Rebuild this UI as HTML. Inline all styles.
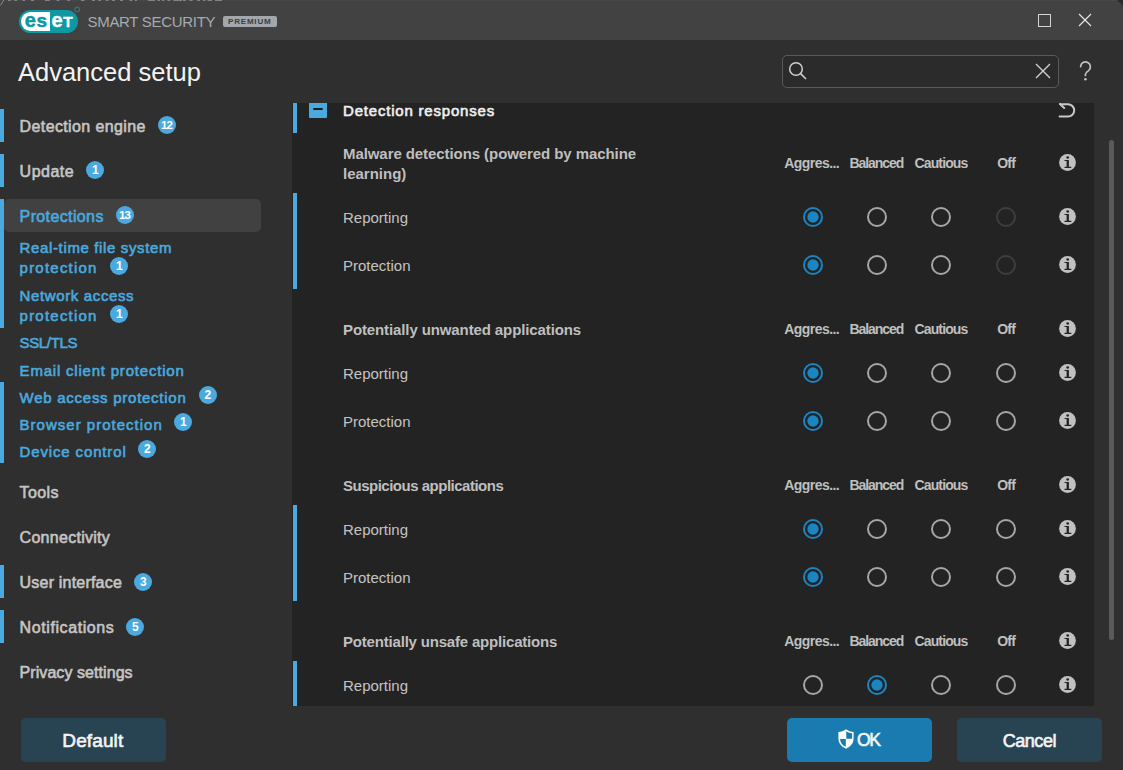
<!DOCTYPE html>
<html><head><meta charset="utf-8"><style>
html,body{margin:0;padding:0;width:1123px;height:770px;overflow:hidden;background:#2a2a2a;}
body{position:relative;font-family:"Liberation Sans", sans-serif;}
.t{position:absolute;white-space:nowrap;line-height:1;}
.r{position:absolute;box-sizing:border-box;}
div.r{box-sizing:content-box;}
.badge{position:absolute;width:18px;height:18px;border-radius:50%;background:#4aaadf;color:#fff;font-size:11px;font-weight:700;text-align:center;line-height:19.5px;letter-spacing:-0.5px;}
.btn{position:absolute;height:44px;border-radius:5px;color:#f4f4f4;font-size:19px;text-align:center;line-height:46px;}
</style></head><body>
<div class="r" style="left:0px;top:1px;width:1123px;height:769px;background:#2f2f2f;border-radius:0 8px 0 0;"></div><div class="r" style="left:0px;top:0px;width:1118px;height:1px;background:#474747;"></div><div class="r" style="left:0px;top:1px;width:1123px;height:39px;background:#424242;border-radius:0 8px 0 0;"></div><svg class="r" style="left:0;top:0" width="230" height="8" viewBox="0 0 230 8"><rect x="8" y="0" width="2.7" height="1" fill="#80858a"/><rect x="14.4" y="0" width="2.6" height="1" fill="#80858a"/><rect x="22.4" y="0" width="2.6" height="1" fill="#80858a"/><rect x="31" y="0" width="3.0" height="1" fill="#80858a"/><rect x="45" y="0" width="4.7" height="1" fill="#80858a"/><rect x="56.6" y="0" width="2.7" height="1" fill="#80858a"/><rect x="67.3" y="0" width="2.7" height="1" fill="#80858a"/><rect x="81" y="0" width="3.4" height="1" fill="#80858a"/><rect x="92" y="0" width="3.0" height="1" fill="#80858a"/><rect x="98.3" y="0" width="2.7" height="1" fill="#80858a"/><rect x="105.8" y="0" width="2.6" height="1" fill="#80858a"/><rect x="112" y="0" width="3.0" height="1" fill="#80858a"/><rect x="120" y="0" width="3.0" height="1" fill="#80858a"/><rect x="129.6" y="0" width="2.7" height="1" fill="#80858a"/><rect x="135" y="0" width="2.0" height="1" fill="#80858a"/><rect x="148" y="0" width="7.0" height="1" fill="#80858a"/><rect x="157.4" y="0" width="2.6" height="1" fill="#80858a"/><rect x="162" y="0" width="2.3" height="1" fill="#80858a"/><rect x="167.5" y="0" width="2.7" height="1" fill="#80858a"/><rect x="173.4" y="0" width="8.6" height="1" fill="#80858a"/><rect x="183" y="0" width="2.7" height="1" fill="#80858a"/><rect x="189.4" y="0" width="3.2" height="1" fill="#80858a"/><rect x="197" y="0" width="3.0" height="1" fill="#80858a"/><rect x="203" y="0" width="2.5" height="1" fill="#80858a"/><rect x="207.6" y="0" width="4.4" height="1" fill="#80858a"/><rect x="215" y="0" width="7.0" height="1" fill="#80858a"/><path d="M0.3 5.5 L3.8 0" stroke="#8a8f94" stroke-width="1"/></svg><svg class="r" style="left:19px;top:6px" width="62" height="28" viewBox="0 0 62 28">
<rect x="0" y="4" width="59" height="23" rx="11.5" fill="#0e98a2"/>
<path d="M11.5 6 H31 V25 H11.5 A9.5 9.5 0 0 1 11.5 6 Z" fill="#ffffff"/>
<text x="5.8" y="21" font-family="Liberation Sans" font-weight="700" font-size="20" fill="#0e98a2" stroke="#0e98a2" stroke-width="0.5">e</text>
<text x="17.6" y="21" font-family="Liberation Sans" font-weight="700" font-size="19" fill="#0e98a2" stroke="#0e98a2" stroke-width="0.5">s</text>
<text x="32.4" y="21" font-family="Liberation Sans" font-weight="700" font-size="20" fill="#ffffff" stroke="#ffffff" stroke-width="0.4">e</text>
<text x="44.3" y="21" font-family="Liberation Sans" font-weight="700" font-size="15.4" fill="#ffffff" stroke="#ffffff" stroke-width="0.4">T</text>
<circle cx="58.2" cy="3.5" r="2.4" fill="none" stroke="#0e98a2" stroke-width="0.9"/>
</svg><div class="t" style="left:87.5px;top:14.30px;font-size:15px;color:#a7abaf;font-weight:400;letter-spacing:-0.3px;">SMART SECURITY</div><div class="r" style="left:222.5px;top:16px;width:54.5px;height:11px;background:#a3a7ab;border-radius:2px;"></div><div class="t" style="left:149.75px;width:200px;text-align:center;top:18.23px;font-size:8px;color:#3b3d40;font-weight:700;letter-spacing:0.8px;">PREMIUM</div><div class="r" style="left:1037.5px;top:13.8px;width:11.2px;height:11.2px;border:1.2px solid #d6d6d6;border-radius:0.5px"></div><svg class="r" style="left:1078px;top:13px" width="14" height="14" viewBox="0 0 14 14"><path d="M1 1 L13 13 M13 1 L1 13" stroke="#e6e6e6" stroke-width="1.2"/></svg><div class="t" style="left:18px;top:60.41px;font-size:25.5px;color:#f3f3f3;font-weight:400;">Advanced setup</div><div class="r" style="left:782px;top:55px;width:275px;height:31px;border:1px solid #5a5a5a;border-radius:5px;background:#2b2b2b"></div><svg class="r" style="left:787px;top:61px" width="22" height="20" viewBox="0 0 22 20"><circle cx="9" cy="8" r="6.3" fill="none" stroke="#cfcfcf" stroke-width="1.5"/><path d="M13.6 12.6 L19 18" stroke="#cfcfcf" stroke-width="1.6"/></svg><svg class="r" style="left:1035px;top:63px" width="16" height="16" viewBox="0 0 16 16"><path d="M1 1 L15 15 M15 1 L1 15" stroke="#d0d0d0" stroke-width="1.4"/></svg><svg class="r" style="left:1070px;top:55px" width="30" height="30" viewBox="0 0 30 30"><path d="M10.6 11.6 A4.9 4.9 0 1 1 18.6 15.6 Q15.4 17.6 15.4 19.6 V20.4" fill="none" stroke="#c2c2c2" stroke-width="1.7" stroke-linecap="round"/><circle cx="15.4" cy="24.2" r="1.3" fill="#c2c2c2"/></svg><div class="r" style="left:4px;top:199px;width:257px;height:33px;background:#414141;border-radius:5px;"></div><div class="r" style="left:0px;top:109px;width:4px;height:33px;background:#4aa9de;"></div><div class="r" style="left:0px;top:154px;width:4px;height:33px;background:#4aa9de;"></div><div class="r" style="left:0px;top:199px;width:4px;height:129px;background:#4aa9de;"></div><div class="r" style="left:0px;top:382px;width:4px;height:81px;background:#4aa9de;"></div><div class="r" style="left:0px;top:565px;width:4px;height:33px;background:#4aa9de;"></div><div class="r" style="left:0px;top:610px;width:4px;height:33px;background:#4aa9de;"></div><div class="t" style="left:19.6px;top:118.96px;font-size:16px;color:#c5c5c5;font-weight:400;-webkit-text-stroke:0.6px #c5c5c5;letter-spacing:0.381px;">Detection engine</div><div class="t" style="left:19.6px;top:163.96px;font-size:16px;color:#c5c5c5;font-weight:400;-webkit-text-stroke:0.6px #c5c5c5;letter-spacing:0.481px;">Update</div><div class="t" style="left:19.6px;top:208.96px;font-size:16px;color:#4aa9de;font-weight:400;-webkit-text-stroke:0.6px #4aa9de;letter-spacing:0.376px;">Protections</div><div class="t" style="left:19.6px;top:484.96px;font-size:16px;color:#c5c5c5;font-weight:400;-webkit-text-stroke:0.6px #c5c5c5;letter-spacing:0.387px;">Tools</div><div class="t" style="left:19.6px;top:529.96px;font-size:16px;color:#c5c5c5;font-weight:400;-webkit-text-stroke:0.6px #c5c5c5;letter-spacing:0.277px;">Connectivity</div><div class="t" style="left:19.6px;top:574.96px;font-size:16px;color:#c5c5c5;font-weight:400;-webkit-text-stroke:0.6px #c5c5c5;letter-spacing:0.200px;">User interface</div><div class="t" style="left:19.6px;top:619.96px;font-size:16px;color:#c5c5c5;font-weight:400;-webkit-text-stroke:0.6px #c5c5c5;letter-spacing:0.588px;">Notifications</div><div class="t" style="left:19.6px;top:664.96px;font-size:16px;color:#c5c5c5;font-weight:400;-webkit-text-stroke:0.6px #c5c5c5;letter-spacing:0.064px;">Privacy settings</div><div class="t" style="left:19.6px;top:239.50px;font-size:15px;color:#4aa9de;font-weight:400;-webkit-text-stroke:0.6px #4aa9de;letter-spacing:0.635px;">Real-time file system</div><div class="t" style="left:19.6px;top:260.30px;font-size:15px;color:#4aa9de;font-weight:400;-webkit-text-stroke:0.6px #4aa9de;letter-spacing:1.219px;">protection</div><div class="t" style="left:19.6px;top:287.50px;font-size:15px;color:#4aa9de;font-weight:400;-webkit-text-stroke:0.6px #4aa9de;letter-spacing:0.626px;">Network access</div><div class="t" style="left:19.6px;top:308.30px;font-size:15px;color:#4aa9de;font-weight:400;-webkit-text-stroke:0.6px #4aa9de;letter-spacing:1.219px;">protection</div><div class="t" style="left:19.6px;top:335.30px;font-size:15px;color:#4aa9de;font-weight:400;-webkit-text-stroke:0.6px #4aa9de;letter-spacing:-0.371px;">SSL/TLS</div><div class="t" style="left:19.6px;top:362.60px;font-size:15px;color:#4aa9de;font-weight:400;-webkit-text-stroke:0.6px #4aa9de;letter-spacing:0.791px;">Email client protection</div><div class="t" style="left:19.6px;top:389.60px;font-size:15px;color:#4aa9de;font-weight:400;-webkit-text-stroke:0.6px #4aa9de;letter-spacing:0.734px;">Web access protection</div><div class="t" style="left:19.6px;top:416.60px;font-size:15px;color:#4aa9de;font-weight:400;-webkit-text-stroke:0.6px #4aa9de;letter-spacing:1.005px;">Browser protection</div><div class="t" style="left:19.6px;top:443.50px;font-size:15px;color:#4aa9de;font-weight:400;-webkit-text-stroke:0.6px #4aa9de;letter-spacing:0.853px;">Device control</div><div class="badge" style="left:158px;top:116px;font-size:11.5px;letter-spacing:-0.9px;text-indent:-0.9px">12</div><div class="badge" style="left:86px;top:161px;font-size:12px">1</div><div class="badge" style="left:116px;top:206px;font-size:11.5px;letter-spacing:-0.9px;text-indent:-0.9px">13</div><div class="badge" style="left:110px;top:257px;font-size:12px">1</div><div class="badge" style="left:110px;top:305px;font-size:12px">1</div><div class="badge" style="left:198.5px;top:386px;font-size:12px">2</div><div class="badge" style="left:174px;top:413px;font-size:12px">1</div><div class="badge" style="left:138px;top:440px;font-size:12px">2</div><div class="badge" style="left:134px;top:572.5px;font-size:12px">3</div><div class="badge" style="left:126px;top:618px;font-size:12px">5</div><div class="r" style="left:292px;top:103px;width:802px;height:603px;background:#232323;"></div><div class="r" style="left:293px;top:103px;width:4px;height:30px;background:#4aa9de;"></div><div class="r" style="left:293px;top:193px;width:4px;height:96px;background:#4aa9de;"></div><div class="r" style="left:293px;top:505px;width:4px;height:96px;background:#4aa9de;"></div><div class="r" style="left:293px;top:661px;width:4px;height:45px;background:#4aa9de;"></div><div class="r" style="left:1109px;top:140px;width:5px;height:500px;background:#5a5a5a;border-radius:3px;"></div><div class="r" style="left:309px;top:103px;width:18px;height:15px;background:#4aa9de;border-radius:0 0 1px 1px;"></div><div class="r" style="left:312.7px;top:107.5px;width:10.600000000000023px;height:2.799999999999997px;background:#1d1d1d;border-radius:1.4px;"></div><div class="t" style="left:343px;top:103.30px;font-size:15px;color:#efefef;font-weight:400;-webkit-text-stroke:0.6px #efefef;letter-spacing:0.803px;">Detection responses</div><svg class="r" style="left:1057px;top:103px" width="20" height="17" viewBox="0 2 20 17"><path d="M3 3 L7.2 7" stroke="#c8c8c8" stroke-width="2" fill="none" stroke-linecap="round"/><path d="M3.2 3.2 H11 A6.2 6.2 0 0 1 11 15.6 H2.6" stroke="#c8c8c8" stroke-width="2" fill="none" stroke-linecap="round"/></svg><div class="t" style="left:343px;top:146.30px;font-size:15px;color:#bfbfbf;font-weight:700;letter-spacing:-0.075px;">Malware detections (powered by machine</div><div class="t" style="left:343px;top:165.80px;font-size:15px;color:#bfbfbf;font-weight:700;">learning)</div><div class="t" style="left:711.7px;width:200px;text-align:center;top:156.15px;font-size:14px;color:#bfbfbf;font-weight:700;letter-spacing:-0.539px;">Aggres...</div><div class="t" style="left:776.4px;width:200px;text-align:center;top:156.15px;font-size:14px;color:#bfbfbf;font-weight:700;letter-spacing:-1.071px;">Balanced</div><div class="t" style="left:841px;width:200px;text-align:center;top:156.15px;font-size:14px;color:#bfbfbf;font-weight:700;letter-spacing:-0.872px;">Cautious</div><div class="t" style="left:906.2px;width:200px;text-align:center;top:156.15px;font-size:14px;color:#bfbfbf;font-weight:700;letter-spacing:-0.726px;">Off</div><svg class="r" style="left:1059.4px;top:154.4px" width="17" height="17" viewBox="0 0 17 17"><circle cx="8.5" cy="8.5" r="8.4" fill="#c0c0c0"/><circle cx="8.7" cy="3.5" r="1.35" fill="#232323"/><path d="M5.5 5.9 H9.9 V12.7 H12.3 V13.9 H5.5 V12.7 H7.6 V7.1 H5.5 Z" fill="#232323"/></svg><div class="t" style="left:343px;top:210.30px;font-size:15px;color:#c3c3c3;font-weight:400;">Reporting</div><svg class="r" style="left:801.5px;top:206px" width="22" height="22" viewBox="0 0 22 22"><circle cx="11" cy="11" r="9" fill="none" stroke="#1b85c2" stroke-width="2"/><circle cx="11" cy="11" r="5.7" fill="#1b85c2"/></svg><svg class="r" style="left:865.5px;top:206px" width="22" height="22" viewBox="0 0 22 22"><circle cx="11" cy="11" r="9" fill="none" stroke="#a6a6a6" stroke-width="2"/></svg><svg class="r" style="left:930px;top:206px" width="22" height="22" viewBox="0 0 22 22"><circle cx="11" cy="11" r="9" fill="none" stroke="#a6a6a6" stroke-width="2"/></svg><svg class="r" style="left:995px;top:206px" width="22" height="22" viewBox="0 0 22 22"><circle cx="11" cy="11" r="9" fill="none" stroke="#3e3e3e" stroke-width="2"/></svg><svg class="r" style="left:1059.4px;top:208.4px" width="17" height="17" viewBox="0 0 17 17"><circle cx="8.5" cy="8.5" r="8.4" fill="#c0c0c0"/><circle cx="8.7" cy="3.5" r="1.35" fill="#232323"/><path d="M5.5 5.9 H9.9 V12.7 H12.3 V13.9 H5.5 V12.7 H7.6 V7.1 H5.5 Z" fill="#232323"/></svg><div class="t" style="left:343px;top:258.30px;font-size:15px;color:#c3c3c3;font-weight:400;">Protection</div><svg class="r" style="left:801.5px;top:254px" width="22" height="22" viewBox="0 0 22 22"><circle cx="11" cy="11" r="9" fill="none" stroke="#1b85c2" stroke-width="2"/><circle cx="11" cy="11" r="5.7" fill="#1b85c2"/></svg><svg class="r" style="left:865.5px;top:254px" width="22" height="22" viewBox="0 0 22 22"><circle cx="11" cy="11" r="9" fill="none" stroke="#a6a6a6" stroke-width="2"/></svg><svg class="r" style="left:930px;top:254px" width="22" height="22" viewBox="0 0 22 22"><circle cx="11" cy="11" r="9" fill="none" stroke="#a6a6a6" stroke-width="2"/></svg><svg class="r" style="left:995px;top:254px" width="22" height="22" viewBox="0 0 22 22"><circle cx="11" cy="11" r="9" fill="none" stroke="#3e3e3e" stroke-width="2"/></svg><svg class="r" style="left:1059.4px;top:256.4px" width="17" height="17" viewBox="0 0 17 17"><circle cx="8.5" cy="8.5" r="8.4" fill="#c0c0c0"/><circle cx="8.7" cy="3.5" r="1.35" fill="#232323"/><path d="M5.5 5.9 H9.9 V12.7 H12.3 V13.9 H5.5 V12.7 H7.6 V7.1 H5.5 Z" fill="#232323"/></svg><div class="t" style="left:343px;top:322.30px;font-size:15px;color:#bfbfbf;font-weight:700;letter-spacing:-0.111px;">Potentially unwanted applications</div><div class="t" style="left:711.7px;width:200px;text-align:center;top:322.15px;font-size:14px;color:#bfbfbf;font-weight:700;letter-spacing:-0.539px;">Aggres...</div><div class="t" style="left:776.4px;width:200px;text-align:center;top:322.15px;font-size:14px;color:#bfbfbf;font-weight:700;letter-spacing:-1.071px;">Balanced</div><div class="t" style="left:841px;width:200px;text-align:center;top:322.15px;font-size:14px;color:#bfbfbf;font-weight:700;letter-spacing:-0.872px;">Cautious</div><div class="t" style="left:906.2px;width:200px;text-align:center;top:322.15px;font-size:14px;color:#bfbfbf;font-weight:700;letter-spacing:-0.726px;">Off</div><svg class="r" style="left:1059.4px;top:320.4px" width="17" height="17" viewBox="0 0 17 17"><circle cx="8.5" cy="8.5" r="8.4" fill="#c0c0c0"/><circle cx="8.7" cy="3.5" r="1.35" fill="#232323"/><path d="M5.5 5.9 H9.9 V12.7 H12.3 V13.9 H5.5 V12.7 H7.6 V7.1 H5.5 Z" fill="#232323"/></svg><div class="t" style="left:343px;top:366.30px;font-size:15px;color:#c3c3c3;font-weight:400;">Reporting</div><svg class="r" style="left:801.5px;top:362px" width="22" height="22" viewBox="0 0 22 22"><circle cx="11" cy="11" r="9" fill="none" stroke="#1b85c2" stroke-width="2"/><circle cx="11" cy="11" r="5.7" fill="#1b85c2"/></svg><svg class="r" style="left:865.5px;top:362px" width="22" height="22" viewBox="0 0 22 22"><circle cx="11" cy="11" r="9" fill="none" stroke="#a6a6a6" stroke-width="2"/></svg><svg class="r" style="left:930px;top:362px" width="22" height="22" viewBox="0 0 22 22"><circle cx="11" cy="11" r="9" fill="none" stroke="#a6a6a6" stroke-width="2"/></svg><svg class="r" style="left:995px;top:362px" width="22" height="22" viewBox="0 0 22 22"><circle cx="11" cy="11" r="9" fill="none" stroke="#a6a6a6" stroke-width="2"/></svg><svg class="r" style="left:1059.4px;top:364.4px" width="17" height="17" viewBox="0 0 17 17"><circle cx="8.5" cy="8.5" r="8.4" fill="#c0c0c0"/><circle cx="8.7" cy="3.5" r="1.35" fill="#232323"/><path d="M5.5 5.9 H9.9 V12.7 H12.3 V13.9 H5.5 V12.7 H7.6 V7.1 H5.5 Z" fill="#232323"/></svg><div class="t" style="left:343px;top:414.30px;font-size:15px;color:#c3c3c3;font-weight:400;">Protection</div><svg class="r" style="left:801.5px;top:410px" width="22" height="22" viewBox="0 0 22 22"><circle cx="11" cy="11" r="9" fill="none" stroke="#1b85c2" stroke-width="2"/><circle cx="11" cy="11" r="5.7" fill="#1b85c2"/></svg><svg class="r" style="left:865.5px;top:410px" width="22" height="22" viewBox="0 0 22 22"><circle cx="11" cy="11" r="9" fill="none" stroke="#a6a6a6" stroke-width="2"/></svg><svg class="r" style="left:930px;top:410px" width="22" height="22" viewBox="0 0 22 22"><circle cx="11" cy="11" r="9" fill="none" stroke="#a6a6a6" stroke-width="2"/></svg><svg class="r" style="left:995px;top:410px" width="22" height="22" viewBox="0 0 22 22"><circle cx="11" cy="11" r="9" fill="none" stroke="#a6a6a6" stroke-width="2"/></svg><svg class="r" style="left:1059.4px;top:412.4px" width="17" height="17" viewBox="0 0 17 17"><circle cx="8.5" cy="8.5" r="8.4" fill="#c0c0c0"/><circle cx="8.7" cy="3.5" r="1.35" fill="#232323"/><path d="M5.5 5.9 H9.9 V12.7 H12.3 V13.9 H5.5 V12.7 H7.6 V7.1 H5.5 Z" fill="#232323"/></svg><div class="t" style="left:343px;top:478.30px;font-size:15px;color:#bfbfbf;font-weight:700;letter-spacing:-0.498px;">Suspicious applications</div><div class="t" style="left:711.7px;width:200px;text-align:center;top:478.15px;font-size:14px;color:#bfbfbf;font-weight:700;letter-spacing:-0.539px;">Aggres...</div><div class="t" style="left:776.4px;width:200px;text-align:center;top:478.15px;font-size:14px;color:#bfbfbf;font-weight:700;letter-spacing:-1.071px;">Balanced</div><div class="t" style="left:841px;width:200px;text-align:center;top:478.15px;font-size:14px;color:#bfbfbf;font-weight:700;letter-spacing:-0.872px;">Cautious</div><div class="t" style="left:906.2px;width:200px;text-align:center;top:478.15px;font-size:14px;color:#bfbfbf;font-weight:700;letter-spacing:-0.726px;">Off</div><svg class="r" style="left:1059.4px;top:476.4px" width="17" height="17" viewBox="0 0 17 17"><circle cx="8.5" cy="8.5" r="8.4" fill="#c0c0c0"/><circle cx="8.7" cy="3.5" r="1.35" fill="#232323"/><path d="M5.5 5.9 H9.9 V12.7 H12.3 V13.9 H5.5 V12.7 H7.6 V7.1 H5.5 Z" fill="#232323"/></svg><div class="t" style="left:343px;top:522.30px;font-size:15px;color:#c3c3c3;font-weight:400;">Reporting</div><svg class="r" style="left:801.5px;top:518px" width="22" height="22" viewBox="0 0 22 22"><circle cx="11" cy="11" r="9" fill="none" stroke="#1b85c2" stroke-width="2"/><circle cx="11" cy="11" r="5.7" fill="#1b85c2"/></svg><svg class="r" style="left:865.5px;top:518px" width="22" height="22" viewBox="0 0 22 22"><circle cx="11" cy="11" r="9" fill="none" stroke="#a6a6a6" stroke-width="2"/></svg><svg class="r" style="left:930px;top:518px" width="22" height="22" viewBox="0 0 22 22"><circle cx="11" cy="11" r="9" fill="none" stroke="#a6a6a6" stroke-width="2"/></svg><svg class="r" style="left:995px;top:518px" width="22" height="22" viewBox="0 0 22 22"><circle cx="11" cy="11" r="9" fill="none" stroke="#a6a6a6" stroke-width="2"/></svg><svg class="r" style="left:1059.4px;top:520.4px" width="17" height="17" viewBox="0 0 17 17"><circle cx="8.5" cy="8.5" r="8.4" fill="#c0c0c0"/><circle cx="8.7" cy="3.5" r="1.35" fill="#232323"/><path d="M5.5 5.9 H9.9 V12.7 H12.3 V13.9 H5.5 V12.7 H7.6 V7.1 H5.5 Z" fill="#232323"/></svg><div class="t" style="left:343px;top:570.30px;font-size:15px;color:#c3c3c3;font-weight:400;">Protection</div><svg class="r" style="left:801.5px;top:566px" width="22" height="22" viewBox="0 0 22 22"><circle cx="11" cy="11" r="9" fill="none" stroke="#1b85c2" stroke-width="2"/><circle cx="11" cy="11" r="5.7" fill="#1b85c2"/></svg><svg class="r" style="left:865.5px;top:566px" width="22" height="22" viewBox="0 0 22 22"><circle cx="11" cy="11" r="9" fill="none" stroke="#a6a6a6" stroke-width="2"/></svg><svg class="r" style="left:930px;top:566px" width="22" height="22" viewBox="0 0 22 22"><circle cx="11" cy="11" r="9" fill="none" stroke="#a6a6a6" stroke-width="2"/></svg><svg class="r" style="left:995px;top:566px" width="22" height="22" viewBox="0 0 22 22"><circle cx="11" cy="11" r="9" fill="none" stroke="#a6a6a6" stroke-width="2"/></svg><svg class="r" style="left:1059.4px;top:568.4px" width="17" height="17" viewBox="0 0 17 17"><circle cx="8.5" cy="8.5" r="8.4" fill="#c0c0c0"/><circle cx="8.7" cy="3.5" r="1.35" fill="#232323"/><path d="M5.5 5.9 H9.9 V12.7 H12.3 V13.9 H5.5 V12.7 H7.6 V7.1 H5.5 Z" fill="#232323"/></svg><div class="t" style="left:343px;top:634.30px;font-size:15px;color:#bfbfbf;font-weight:700;letter-spacing:-0.190px;">Potentially unsafe applications</div><div class="t" style="left:711.7px;width:200px;text-align:center;top:634.15px;font-size:14px;color:#bfbfbf;font-weight:700;letter-spacing:-0.539px;">Aggres...</div><div class="t" style="left:776.4px;width:200px;text-align:center;top:634.15px;font-size:14px;color:#bfbfbf;font-weight:700;letter-spacing:-1.071px;">Balanced</div><div class="t" style="left:841px;width:200px;text-align:center;top:634.15px;font-size:14px;color:#bfbfbf;font-weight:700;letter-spacing:-0.872px;">Cautious</div><div class="t" style="left:906.2px;width:200px;text-align:center;top:634.15px;font-size:14px;color:#bfbfbf;font-weight:700;letter-spacing:-0.726px;">Off</div><svg class="r" style="left:1059.4px;top:632.4px" width="17" height="17" viewBox="0 0 17 17"><circle cx="8.5" cy="8.5" r="8.4" fill="#c0c0c0"/><circle cx="8.7" cy="3.5" r="1.35" fill="#232323"/><path d="M5.5 5.9 H9.9 V12.7 H12.3 V13.9 H5.5 V12.7 H7.6 V7.1 H5.5 Z" fill="#232323"/></svg><div class="t" style="left:343px;top:678.30px;font-size:15px;color:#c3c3c3;font-weight:400;">Reporting</div><svg class="r" style="left:801.5px;top:674px" width="22" height="22" viewBox="0 0 22 22"><circle cx="11" cy="11" r="9" fill="none" stroke="#a6a6a6" stroke-width="2"/></svg><svg class="r" style="left:865.5px;top:674px" width="22" height="22" viewBox="0 0 22 22"><circle cx="11" cy="11" r="9" fill="none" stroke="#1b85c2" stroke-width="2"/><circle cx="11" cy="11" r="5.7" fill="#1b85c2"/></svg><svg class="r" style="left:930px;top:674px" width="22" height="22" viewBox="0 0 22 22"><circle cx="11" cy="11" r="9" fill="none" stroke="#a6a6a6" stroke-width="2"/></svg><svg class="r" style="left:995px;top:674px" width="22" height="22" viewBox="0 0 22 22"><circle cx="11" cy="11" r="9" fill="none" stroke="#a6a6a6" stroke-width="2"/></svg><svg class="r" style="left:1059.4px;top:676.4px" width="17" height="17" viewBox="0 0 17 17"><circle cx="8.5" cy="8.5" r="8.4" fill="#c0c0c0"/><circle cx="8.7" cy="3.5" r="1.35" fill="#232323"/><path d="M5.5 5.9 H9.9 V12.7 H12.3 V13.9 H5.5 V12.7 H7.6 V7.1 H5.5 Z" fill="#232323"/></svg><div class="btn" style="left:21px;top:718px;width:145px;background:#284453"></div><div class="t" style="left:62.3px;top:730.92px;font-size:19px;color:#f4f4f4;font-weight:400;-webkit-text-stroke:0.6px #f4f4f4;letter-spacing:0.113px;">Default</div><div class="btn" style="left:787px;top:718px;width:145px;background:#1a7bb0"></div><svg class="r" style="left:838px;top:729px" width="16" height="20" viewBox="0 0 16 20"><path d="M8 0.3 C5.8 2 3.3 2.8 0.4 3 V9.3 C0.4 14.3 3.4 17.7 8 19.7 C12.6 17.7 15.6 14.3 15.6 9.3 V3 C12.7 2.8 10.2 2 8 0.3 Z" fill="#ffffff"/><path d="M8.3 2.2 C10 3.3 12 4.1 14.1 4.3 V9.3 L14.1 9.8 H8.3 Z M7.8 9.9 H2 C2.2 13.6 4.5 16.3 7.8 17.8 Z" fill="#1a7bb0"/></svg><div class="t" style="left:857px;top:732.19px;font-size:17.5px;color:#f4f4f4;font-weight:400;-webkit-text-stroke:0.6px #f4f4f4;letter-spacing:-1.412px;">OK</div><div class="btn" style="left:957px;top:718px;width:145px;background:#284453"></div><div class="t" style="left:1002.7px;top:731.76px;font-size:18px;color:#f4f4f4;font-weight:400;-webkit-text-stroke:0.6px #f4f4f4;letter-spacing:-0.446px;">Cancel</div>
</body></html>
